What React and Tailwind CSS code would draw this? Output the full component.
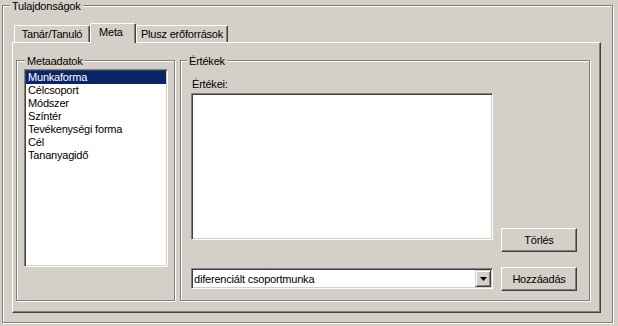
import React from 'react';

const items = ['Munkaforma', 'Célcsoport', 'Módszer', 'Színtér', 'Tevékenységi forma', 'Cél', 'Tananyagidő'];

function GroupLabel({ children, className }) {
  return (
    <span className={'absolute -top-[6px] bg-[#d4d0c8] px-[2px] leading-[12px] whitespace-nowrap ' + className}>
      {children}
    </span>
  );
}

function Tab({ label, active, width }) {
  if (active) {
    return (
      <div
        className={`${width} relative z-10 -mb-px flex h-[20px] justify-start rounded-t-[2px] border-t border-l border-r border-t-white border-l-white border-r-[#404040] bg-[#d4d0c8] pt-[2px] pl-[8px] leading-[12px] shadow-[inset_-1px_0_0_#808080]`}
      >
        {label}
      </div>
    );
  }
  return (
    <div
      className={`${width} flex h-[17px] justify-center rounded-t-[2px] border-t border-l border-r border-t-white border-l-white border-r-[#404040] pt-[2px] leading-[12px] shadow-[inset_-1px_0_0_#808080]`}
    >
      {label}
    </div>
  );
}

function Button({ children }) {
  return (
    <button className="flex h-[24px] w-[76px] items-center justify-center border border-t-white border-l-white border-r-[#404040] border-b-[#404040] bg-[#d4d0c8] leading-[12px] shadow-[inset_-1px_-1px_0_#808080]">
      {children}
    </button>
  );
}

export default function App() {
  return (
    <div
      className="h-[326px] w-[618px] overflow-hidden bg-[#d4d0c8] pt-[5px] pl-[2px] pr-[5px] pb-[3px] text-[11px] tracking-[-0.2px] text-black"
      style={{ fontFamily: '"Liberation Sans", Arial, sans-serif' }}
    >
      {/* Tulajdonságok */}
      <div className="relative flex h-[318px] w-[611px] flex-col border border-[#808080] pt-[17px] pl-[9px] pr-[11px] pb-[9px] shadow-[inset_1px_1px_0_#fff,1px_1px_0_#fff]">
        <GroupLabel className="left-[7px]">Tulajdonságok</GroupLabel>

        {/* tabs */}
        <div className="flex h-[19px] items-end pl-[2px]">
          <Tab label="Tanár/Tanuló" width="w-[76px]" />
          <Tab label="Meta" width="w-[46px]" active />
          <Tab label="Plusz erőforrások" width="w-[92px]" />
        </div>

        {/* tab panel */}
        <div className="flex flex-1 border border-t-white border-l-white border-r-[#404040] border-b-[#404040] pt-[17px] pl-[3px] pr-[10px] pb-[11px] shadow-[inset_-1px_-1px_0_#808080]">
          {/* Metaadatok */}
          <div className="relative w-[159px] border border-[#808080] pt-[8px] pl-[7px] shadow-[inset_1px_1px_0_#fff,1px_1px_0_#fff]">
            <GroupLabel className="left-[8px]">Metaadatok</GroupLabel>
            <div className="h-[198px] w-[144px] border border-t-[#808080] border-l-[#808080] border-r-white border-b-white bg-white shadow-[inset_1px_1px_0_#404040,inset_-1px_-1px_0_#d4d0c8]">
              <div className="pt-px pl-px pr-px">
                {items.map((item, i) => (
                  <div
                    key={item}
                    className={
                      i === 0
                        ? 'h-[13px] bg-[#0a246a] pl-[2px] leading-[13px] text-white'
                        : 'h-[13px] pl-[2px] leading-[13px]'
                    }
                  >
                    {item}
                  </div>
                ))}
              </div>
            </div>
          </div>

          {/* Értékek */}
          <div className="relative ml-[5px] w-[410px] border border-[#808080] pt-[17px] pl-[10px] shadow-[inset_1px_1px_0_#fff,1px_1px_0_#fff]">
            <GroupLabel className="left-[6px]">Értékek</GroupLabel>
            <div className="flex items-end gap-[8px]">
              <div className="flex w-[302px] flex-col pb-[2px]">
                <div className="h-[12px] pl-px leading-[12px]">Értékei:</div>
                <div className="mt-[3px] h-[147px] border border-t-[#808080] border-l-[#808080] border-r-white border-b-white bg-white shadow-[inset_1px_1px_0_#404040,inset_-1px_-1px_0_#d4d0c8]" />
                <div className="mt-[28px] flex h-[21px] items-center border border-t-[#808080] border-l-[#808080] border-r-white border-b-white bg-white p-px shadow-[inset_1px_1px_0_#404040,inset_-1px_-1px_0_#d4d0c8]">
                  <span className="flex-1 pl-px leading-[12px]">diferenciált csoportmunka</span>
                  <div className="flex h-[17px] w-[16px] items-center justify-center border border-t-[#d4d0c8] border-l-[#d4d0c8] border-r-[#404040] border-b-[#404040] bg-[#d4d0c8] shadow-[inset_1px_1px_0_#fff,inset_-1px_-1px_0_#808080]">
                    <svg width="7" height="4" viewBox="0 0 7 4">
                      <path d="M0 0h7L3.5 4z" fill="#000" />
                    </svg>
                  </div>
                </div>
              </div>
              <div className="flex flex-col">
                <Button>Törlés</Button>
                <div className="mt-[15px]">
                  <Button>Hozzáadás</Button>
                </div>
              </div>
            </div>
          </div>
        </div>
      </div>
    </div>
  );
}
